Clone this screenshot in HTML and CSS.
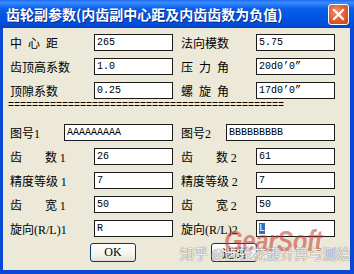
FILE: index.html
```html
<!DOCTYPE html>
<html>
<head>
    <title>齿轮副参数</title>
    <link rel="stylesheet" href="styles.css">
</head>
<body>
    <div class="window">
        <div class="title-bar">
            <div class="title">齿轮副参数(内齿副中心距及内齿齿数为负值)</div>
            <div class="close-button">
                <svg width="13" height="13" viewBox="0 0 13 13">
                    <path d="M2 2 L11 11 M11 2 L2 11" stroke="#fff" stroke-width="2.2" stroke-linecap="square"/>
                </svg>
            </div>
        </div>

        <div class="content">
            <div class="form">
                <div class="label wide spread">中心距</div>
                <div class="field">265</div>
                <div class="label wide">法向模数</div>
                <div class="field">5.75</div>

                <div class="label wide">齿顶高系数</div>
                <div class="field">1.0</div>
                <div class="label wide spread">压力角</div>
                <div class="field">20d0’0”</div>

                <div class="label wide">顶隙系数</div>
                <div class="field">0.25</div>
                <div class="label wide spread">螺旋角</div>
                <div class="field">17d0’0”</div>
            </div>

            <div class="separator">==============================================</div>

            <div class="form">
                <div class="label">图号<span class="ascii">1</span></div>
                <div class="field long">AAAAAAAAA</div>
                <div class="label">图号<span class="ascii">2</span></div>
                <div class="field long">BBBBBBBBB</div>

                <div class="label wide"><span class="gap">齿</span>数 <span class="ascii">1</span></div>
                <div class="field">26</div>
                <div class="label wide"><span class="gap">齿</span>数 <span class="ascii">2</span></div>
                <div class="field">61</div>

                <div class="label wide">精度等级 <span class="ascii">1</span></div>
                <div class="field">7</div>
                <div class="label wide">精度等级 <span class="ascii">2</span></div>
                <div class="field">7</div>

                <div class="label wide"><span class="gap">齿</span>宽 <span class="ascii">1</span></div>
                <div class="field">50</div>
                <div class="label wide"><span class="gap">齿</span>宽 <span class="ascii">2</span></div>
                <div class="field">50</div>

                <div class="label wide">旋向<span class="ascii">(R/L)1</span></div>
                <div class="field">R</div>
                <div class="label wide">旋向<span class="ascii">(R/L)2</span></div>
                <div class="field"><span class="selected">L</span></div>
            </div>

            <div class="buttons">
                <button class="button ok">OK</button>
                <button class="button quit">退出</button>
            </div>
        </div>

        <div class="watermark">
            <div class="brand">GearSoft</div>
            <div class="credit">知乎 @齿轮花键计算与测绘</div>
        </div>
    </div>
</body>
</html>
```

FILE: styles.css
```css
body {
    margin: 0;
    padding: 0;
    font-family: "Noto Sans CJK SC", sans-serif;
    background: #ece9d8;
}

.window {
    position: relative;
    width: 354px;
    height: 274px;
    display: flex;
    flex-direction: column;
    overflow: hidden;
}

.title-bar {
    height: 28px;
    flex: none;
    display: flex;
    justify-content: space-between;
    align-items: center;
    padding: 0 5px 0 6px;
    background: linear-gradient(#1d6cf2 0%, #3a8cff 10%, #0a5ee8 30%, #0054e3 60%, #0050dc 85%, #0042c4 100%);
}

.title {
    color: #ffffff;
    font-size: 14px;
    font-weight: bold;
    text-shadow: 1px 1px 0 #0a2a8a;
    white-space: nowrap;
}

.close-button {
    width: 19px;
    height: 19px;
    display: flex;
    align-items: center;
    justify-content: center;
    border: 1px solid #ffffff;
    border-radius: 3px;
    background: radial-gradient(circle at 40% 35%, #f0906a 0%, #e05a32 55%, #c8401c 100%);
}

.content {
    flex: 1;
    border: 0 solid #0a48d6;
    border-width: 0 4px 4px 3px;
    padding: 6px 7px 0 7px;
    background: #ece9d8;
}

.form {
    display: grid;
    grid-template-columns: 54px 30px 79px 53px 30px 79px;
    grid-auto-rows: 17px;
    row-gap: 7px;
}

.form .label:nth-child(4n+3) {
    margin-left: 8px;
}

.label {
    font-size: 12px;
    color: #000000;
    line-height: 17px;
    white-space: nowrap;
}

.label.wide {
    grid-column: span 2;
}

.spread {
    letter-spacing: 6px;
}

.gap {
    display: inline-block;
    width: 35px;
}

.ascii {
    font-family: "Liberation Serif", serif;
    font-size: 12px;
}

.field {
    box-sizing: border-box;
    height: 17px;
    border: 1px solid #1a1a1a;
    background: #ffffff;
    font-family: "Liberation Mono", monospace;
    font-size: 10px;
    line-height: 15px;
    padding-left: 2px;
    color: #000000;
    white-space: nowrap;
    overflow: hidden;
}

.field.long {
    grid-column: span 2;
}

.selected {
    background: #316ac5;
    color: #ffffff;
}

.separator {
    box-sizing: border-box;
    height: 25px;
    padding-top: 2px;
    font-family: "Liberation Mono", monospace;
    font-size: 10px;
    line-height: 9px;
    width: 277px;
    margin-left: -2px;
    overflow: hidden;
    white-space: nowrap;
    color: #000000;
}

.buttons {
    display: flex;
    margin-top: 6px;
    padding-left: 80px;
    gap: 75px;
}

.button {
    width: 46px;
    height: 19px;
    padding: 0;
    border: 1px solid #003c74;
    border-radius: 3px;
    background: linear-gradient(#ffffff 0%, #f4f3ee 60%, #e3e1d6 100%);
    font-family: "Liberation Serif", "Noto Sans CJK SC", serif;
    font-size: 12px;
    color: #000000;
}

.watermark {
    position: absolute;
    left: 180px;
    top: 224px;
    width: 170px;
    height: 44px;
}

.brand {
    position: absolute;
    left: 44px;
    top: 0;
    font-family: "Liberation Sans", sans-serif;
    font-style: italic;
    font-weight: bold;
    font-size: 30px;
    line-height: 34px;
    color: rgba(196, 52, 44, 0.55);
    letter-spacing: -0.5px;
    transform: scaleX(0.8);
    transform-origin: left center;
}

.credit {
    position: absolute;
    left: 0;
    top: 20px;
    font-size: 14px;
    line-height: 18px;
    white-space: nowrap;
    color: rgba(255, 255, 255, 0.9);
    text-shadow: 0 0 1px #7a7a7a, 0 0 1px #7a7a7a;
}
```
